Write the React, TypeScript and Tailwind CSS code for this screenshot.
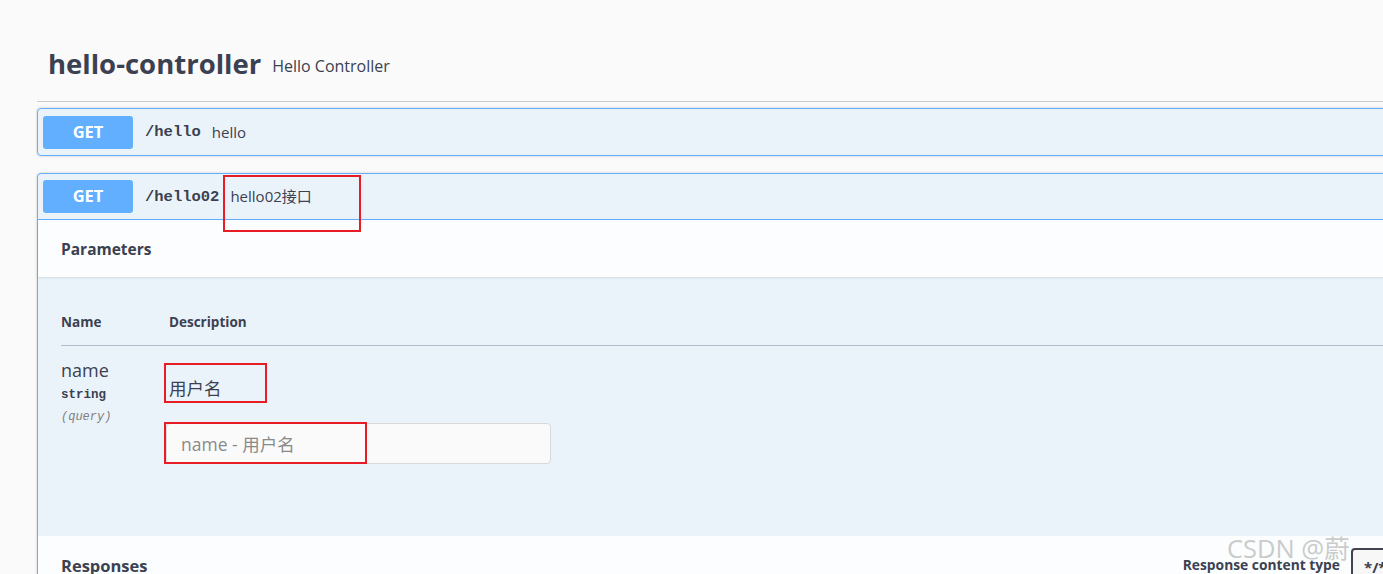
import React from "react";

const sans = "font-['Open_Sans','Noto_Sans_CJK_SC',sans-serif]";
const mono = "font-['Liberation_Mono','Noto_Sans_CJK_SC',monospace]";

function GetButton() {
  return (
    <span className="flex h-[33px] w-[90px] shrink-0 items-center justify-center rounded-[3px] bg-[#61affe] text-[16.5px] font-bold text-white">
      GET
    </span>
  );
}

function RedBox({ className }: { className: string }) {
  return <div className={`pointer-events-none absolute border-2 border-[#e81c24] ${className}`} />;
}

export default function App() {
  return (
    <div className={`relative h-[574px] w-full overflow-hidden bg-[#fafafa] text-[#3b4151] ${sans}`}>
      <div className="ml-[37px] w-[1426px]">
        {/* tag header */}
        <div className="flex h-[102px] items-end border-b border-[#cccccc] pb-[19px] pl-[11px]">
          <h2 className="text-[27.5px] leading-[36px] font-bold">hello-controller</h2>
          <span className="ml-[11px] pb-[4px] text-[16px] leading-[24px]">Hello Controller</span>
        </div>

        {/* /hello */}
        <div className="mt-[6px] rounded-[4px] border border-[#61affe] bg-[#ebf3fa] shadow-[0_0_3px_rgba(0,0,0,0.19)]">
          <div className="flex h-[46px] items-center px-[5px]">
            <GetButton />
            <span className={`ml-[12px] pt-[2px] text-[15.5px] font-bold ${mono}`}>/hello</span>
            <span className="ml-[11px] text-[15px]">hello</span>
          </div>
        </div>

        {/* /hello02 */}
        <div className="mt-[17px] rounded-[4px] border border-[#61affe] bg-[#ebf3fa] shadow-[0_0_3px_rgba(0,0,0,0.19)]">
          <div className="flex h-[46px] items-center border-b border-[#61affe] px-[5px]">
            <GetButton />
            <span className={`ml-[12px] pt-[2px] text-[15.5px] font-bold ${mono}`}>/hello02</span>
            <span className="ml-[11px] text-[15px]">hello02接口</span>
          </div>

          <div className="flex h-[57px] items-center bg-white/80 px-[23px] pt-[2px] shadow-[0_1px_2px_rgba(0,0,0,0.1)]">
            <h4 className="text-[15.5px] font-bold">Parameters</h4>
          </div>

          <div className="px-[23px] pb-[72px]">
            <div className="flex border-b border-[#b3bcc9] pt-[36px] pb-[14px] text-[13.5px] leading-[18px] font-bold">
              <div className="w-[108px]">Name</div>
              <div>Description</div>
            </div>
            <div className="flex">
              <div className="w-[108px] pt-[13px]">
                <div className="text-[18px] leading-[22px]">name</div>
                <div className={`mt-[6px] text-[12.5px] leading-[16px] font-bold ${mono}`}>string</div>
                <div className={`mt-[6px] text-[12px] leading-[16px] italic text-[#808080] ${mono}`}>(query)</div>
              </div>
              <div className="pt-[30px]">
                <div className="text-[17.5px] leading-[24px]">用户名</div>
                <input
                  className="-ml-[3px] mt-[23px] h-[41px] w-[385px] rounded-[4px] border border-[#d9d9d9] bg-[#fafafa] px-[14px] text-[17.5px] outline-none placeholder:text-[#8a8a8a]"
                  placeholder="name - 用户名"
                />
              </div>
            </div>
          </div>

          <div className="flex h-[60px] items-start justify-between bg-white/80 px-[23px] pt-[19px]">
            <h4 className="text-[16.5px] leading-[22px] font-bold">Responses</h4>
            <div className="flex items-start">
              <span className="mt-[0px] text-[13.8px] leading-[20px] font-bold">Response content type</span>
              <div className="ml-[11px] mt-[-7px] h-[36px] w-[88px] rounded-[4px] border-2 border-[#41444e] bg-[#f7f7f7] px-[11px] pt-[6px] text-[15px] font-bold">
                */*
              </div>
            </div>
          </div>
        </div>
      </div>

      <RedBox className="left-[223px] top-[175px] h-[57px] w-[138px]" />
      <RedBox className="left-[164px] top-[363px] h-[40px] w-[103px]" />
      <RedBox className="left-[164px] top-[422px] h-[42px] w-[203px]" />

      <div className="pointer-events-none absolute left-[1227px] top-[532px] text-[25.5px] leading-[32px] text-[#bdbdbd]/80">
        CSDN @蔚
      </div>
    </div>
  );
}
